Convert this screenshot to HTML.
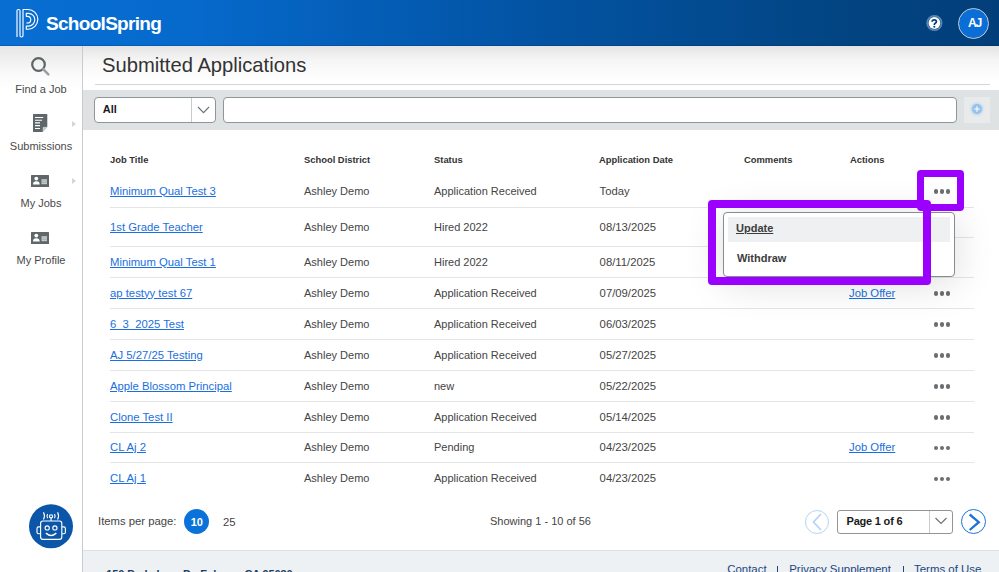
<!DOCTYPE html>
<html><head><meta charset="utf-8">
<style>
*{box-sizing:border-box;margin:0;padding:0}
html,body{width:999px;height:572px;overflow:hidden;background:#fff;font-family:"Liberation Sans",sans-serif;color:#333}
.a{position:absolute}
svg{display:block}
#hdr{left:0;top:0;width:999px;height:46px;background:linear-gradient(90deg,#086ed2 0%,#066acd 18%,#0354a5 52%,#024481 85%,#023e7a 100%);border-bottom:1px solid rgba(0,20,60,0.18)}
#logo-t{left:46px;top:13.3px;color:#fff;font-weight:bold;font-size:19px;letter-spacing:-0.7px}
#side{left:0;top:46px;width:83px;height:526px;background:linear-gradient(180deg,#e6e6e6 0px,#fafafa 28px,#fff 45px);border-right:1px solid #c9cccf}
#mainshade{left:83px;top:46px;width:916px;height:40px;background:linear-gradient(180deg,#e4e4e4 0px,#f6f6f6 15px,#fff 35px)}
.nav{left:0;width:82px;text-align:center;font-size:11px;color:#4a4a4a}
.caret{width:0;height:0;border-top:3.5px solid transparent;border-bottom:3.5px solid transparent;border-left:4px solid #d3d6d7}
#title{left:102px;top:54.2px;font-size:20.2px;color:#333}
#hr{left:95px;top:84px;width:895px;height:1px;background:#d6d6d6}
#band{left:83px;top:90px;width:916px;height:40px;background:#dfe2e3}
#sel{left:94px;top:97px;width:122px;height:26px;background:#fff;border:1px solid #8f9598;border-radius:4px}
#inp{left:223px;top:97px;width:734px;height:26px;background:#fff;border:1px solid #8f9598;border-radius:4px}
#plus{left:964px;top:97px;width:25.5px;height:25.5px;background:#e8eaeb}
th,td{font-size:11px}
.th{font-size:9.4px;font-weight:bold;color:#333;top:153.9px}
.cell{font-size:11px;color:#444;white-space:nowrap}
.lnk{color:#1a6fe0;text-decoration:underline;font-size:11.3px}
.dt{font-size:11.3px}
.div{left:110px;width:864px;height:1px;background:#e3e5e6}
.dots{width:16px;height:4px}
.dots i{position:absolute;top:0;width:4.4px;height:4.4px;border-radius:50%;background:#6a6e71}
</style></head><body>
<div id="hdr" class="a"></div>
<svg class="a" style="left:0;top:0" width="50" height="45" viewBox="0 0 50 45"><path d="M17 37 V10.6 Q17 9.5 18.5 9.5 Q20 9.5 20 10.6 V35.8 Q20 37 21.5 37 Q23 37 23 35.8 V9.5 H28 A9.85 9.85 0 0 1 28 29.2 H26.3 V26.1 H28.4 A6.4 6.4 0 0 0 28.4 13.3 H26.3 V16.3 H27.4 A3.35 3.35 0 0 1 27.4 23 H26.3" fill="none" stroke="#fff" stroke-width="1.15" stroke-linejoin="round"/></svg>
<div id="logo-t" class="a">SchoolSpring</div>
<svg class="a" style="left:924px;top:12px" width="20" height="22" viewBox="0 0 20 22"><circle cx="10.4" cy="11" r="7.2" fill="none" stroke="rgba(200,220,245,0.45)" stroke-width="1.8"/><circle cx="10.4" cy="11" r="5.9" fill="#fff"/><path d="M8.1 9.7 Q8.1 7.8 10.3 7.8 Q12.4 7.8 12.4 9.6 Q12.4 10.7 11.2 11.3 Q10.3 11.8 10.3 12.9" fill="none" stroke="#053e7c" stroke-width="1.75"/><circle cx="10.3" cy="14.7" r="1.05" fill="#053e7c"/></svg>
<div class="a" style="left:958px;top:8px;width:31px;height:31px;border-radius:50%;background:#0a6ed6;border:1.5px solid #c0c8d4"></div>
<div class="a" style="left:959px;top:16.3px;width:31px;text-align:center;font-size:12.2px;font-weight:bold;color:#fff;letter-spacing:-1.4px">AJ</div>

<div id="side" class="a"></div>
<div id="mainshade" class="a"></div>

<!-- nav -->
<div class="a" style="left:30px;top:56px">
<svg width="22" height="22" viewBox="0 0 22 22"><circle cx="8.5" cy="8.5" r="6.3" fill="none" stroke="#5f6466" stroke-width="2.2"/><path d="M13.2 13.2 L18.3 18.3" stroke="#9a9ea0" stroke-width="2.5" stroke-linecap="round"/></svg>
</div>
<div class="a nav" style="top:83.2px">Find a Job</div>
<svg class="a" style="left:33px;top:114px" width="15" height="18" viewBox="0 0 15 18"><path d="M0 0.6 Q0 0 0.6 0 H13.7 Q14.3 0 14.3 0.6 V12.7 L9.6 18 H0.6 Q0 18 0 17.4 Z" fill="#5f6769"/><path d="M9.6 18 L9.8 13.6 Q9.8 12.9 10.6 12.9 L14.3 12.7 Z" fill="#c9cdce"/><path d="M2 3.5 H10.3 M2 6.2 H9 M2 8.9 H7 M2 11.6 H7 M2 14.5 H7" stroke="#fff" stroke-width="1.1"/></svg>
<div class="a caret" style="left:72px;top:121px"></div>
<div class="a nav" style="top:140.3px">Submissions</div>
<div class="a" style="left:31px;top:175px"><svg width="18" height="12" viewBox="0 0 18 12"><rect width="18" height="12" rx="0.5" fill="#5f6769"/><circle cx="5.3" cy="3.6" r="1.9" fill="#fff"/><path d="M2 9.5 Q2 6.2 5.3 6.2 Q8.7 6.2 8.7 9.5 Z" fill="#fff"/><rect x="10.5" y="4.2" width="5.5" height="5" fill="#c9cdce"/><path d="M10.5 5.9 H16 M10.5 7.6 H16" stroke="#8e9496" stroke-width="0.5"/></svg></div>
<div class="a caret" style="left:72px;top:178px"></div>
<div class="a nav" style="top:197px">My Jobs</div>
<div class="a" style="left:31px;top:232px"><svg width="18" height="12" viewBox="0 0 18 12"><rect width="18" height="12" rx="0.5" fill="#5f6769"/><circle cx="5.3" cy="3.6" r="1.9" fill="#fff"/><path d="M2 9.5 Q2 6.2 5.3 6.2 Q8.7 6.2 8.7 9.5 Z" fill="#fff"/><rect x="10.5" y="4.2" width="5.5" height="5" fill="#c9cdce"/><path d="M10.5 5.9 H16 M10.5 7.6 H16" stroke="#8e9496" stroke-width="0.5"/></svg></div>
<div class="a nav" style="top:254.1px">My Profile</div>

<!-- robot -->
<svg class="a" style="left:29px;top:504px" width="44" height="45" viewBox="29 504 44 45"><circle cx="51" cy="526.3" r="22" fill="#0b56a8"/><g fill="none" stroke="#fff" stroke-width="1.15"><rect x="40.6" y="521" width="21.2" height="18.3" rx="2.3"/><path d="M40.3 526.9 H38.6 Q37 526.9 37 528.5 V532.2 Q37 533.7 38.6 533.7 H40.3"/><path d="M62.1 526.9 H63.8 Q65.4 526.9 65.4 528.5 V532.2 Q65.4 533.7 63.8 533.7 H62.1"/><circle cx="47.2" cy="527.9" r="2.1"/><circle cx="54.9" cy="527.9" r="2.1"/><path d="M46.3 533.4 Q51.1 537.6 55.9 533.4" stroke-width="1.4" stroke-linecap="round"/><circle cx="51.05" cy="516.3" r="1.6"/><path d="M51.05 517.9 V521"/><path d="M43.5 512.3 Q45.4 515.9 43.5 519.5"/><path d="M47.6 514 Q46.3 516.1 47.6 518.2"/><path d="M54.5 514 Q55.8 516.1 54.5 518.2"/><path d="M57.6 512.3 Q59.5 515.9 57.6 519.5"/></g></svg>

<div id="title" class="a">Submitted Applications</div>
<div id="hr" class="a"></div>
<div id="band" class="a"></div>
<div id="sel" class="a"></div>
<div class="a" style="left:191px;top:98px;width:1px;height:24px;background:#c9cccf"></div>
<div class="a" style="left:102.8px;top:103.3px;font-size:11px;font-weight:bold;color:#1a1a1a">All</div>
<svg class="a" style="left:196px;top:104px" width="15" height="12" viewBox="0 0 15 12"><path d="M2 3 L7.5 8.6 L13 3" fill="none" stroke="#6b7073" stroke-width="1.1"/></svg>
<div id="inp" class="a"></div>
<div id="plus" class="a"></div>
<div class="a" style="left:972.4px;top:104.2px;width:10px;height:10px;border-radius:50%;background:#96c2eb;box-shadow:0 0 2px 1px rgba(150,194,235,0.55)"></div>
<svg class="a" style="left:972.4px;top:104.2px" width="10" height="10" viewBox="0 0 10 10"><path d="M5 2.2 V7.8 M2.2 5 H7.8" stroke="#fff" stroke-width="1.1"/></svg>

<!-- table header -->
<div class="a th" style="left:110px">Job Title</div>
<div class="a th" style="left:304px">School District</div>
<div class="a th" style="left:434px">Status</div>
<div class="a th" style="left:599px">Application Date</div>
<div class="a th" style="left:744px">Comments</div>
<div class="a th" style="left:850px">Actions</div>

<!-- rows -->
<div class="a cell lnk" style="left:110px;top:184.5px">Minimum Qual Test 3</div>
<div class="a cell" style="left:304px;top:184.7px">Ashley Demo</div>
<div class="a cell" style="left:434px;top:184.7px">Application Received</div>
<div class="a cell dt" style="left:599.6px;top:184.5px">Today</div>
<div class="a dots" style="left:934px;top:189.3px"><i style="left:0"></i><i style="left:6px"></i><i style="left:12px"></i></div>
<div class="a cell lnk" style="left:110px;top:220.8px">1st Grade Teacher</div>
<div class="a cell" style="left:304px;top:221.0px">Ashley Demo</div>
<div class="a cell" style="left:434px;top:221.0px">Hired 2022</div>
<div class="a cell dt" style="left:599.6px;top:220.8px">08/13/2025</div>
<div class="a cell lnk" style="left:110px;top:255.8px">Minimum Qual Test 1</div>
<div class="a cell" style="left:304px;top:256.0px">Ashley Demo</div>
<div class="a cell" style="left:434px;top:256.0px">Hired 2022</div>
<div class="a cell dt" style="left:599.6px;top:255.8px">08/11/2025</div>
<div class="a cell lnk" style="left:110px;top:286.5px">ap testyy test 67</div>
<div class="a cell" style="left:304px;top:286.7px">Ashley Demo</div>
<div class="a cell" style="left:434px;top:286.7px">Application Received</div>
<div class="a cell dt" style="left:599.6px;top:286.5px">07/09/2025</div>
<div class="a cell lnk" style="left:849px;top:286.5px">Job Offer</div>
<div class="a dots" style="left:934px;top:291.3px"><i style="left:0"></i><i style="left:6px"></i><i style="left:12px"></i></div>
<div class="a cell lnk" style="left:110px;top:317.5px">6_3_2025 Test</div>
<div class="a cell" style="left:304px;top:317.7px">Ashley Demo</div>
<div class="a cell" style="left:434px;top:317.7px">Application Received</div>
<div class="a cell dt" style="left:599.6px;top:317.5px">06/03/2025</div>
<div class="a dots" style="left:934px;top:322.3px"><i style="left:0"></i><i style="left:6px"></i><i style="left:12px"></i></div>
<div class="a cell lnk" style="left:110px;top:348.5px">AJ 5/27/25 Testing</div>
<div class="a cell" style="left:304px;top:348.7px">Ashley Demo</div>
<div class="a cell" style="left:434px;top:348.7px">Application Received</div>
<div class="a cell dt" style="left:599.6px;top:348.5px">05/27/2025</div>
<div class="a dots" style="left:934px;top:353.3px"><i style="left:0"></i><i style="left:6px"></i><i style="left:12px"></i></div>
<div class="a cell lnk" style="left:110px;top:379.5px">Apple Blossom Principal</div>
<div class="a cell" style="left:304px;top:379.7px">Ashley Demo</div>
<div class="a cell" style="left:434px;top:379.7px">new</div>
<div class="a cell dt" style="left:599.6px;top:379.5px">05/22/2025</div>
<div class="a dots" style="left:934px;top:384.3px"><i style="left:0"></i><i style="left:6px"></i><i style="left:12px"></i></div>
<div class="a cell lnk" style="left:110px;top:410.5px">Clone Test II</div>
<div class="a cell" style="left:304px;top:410.7px">Ashley Demo</div>
<div class="a cell" style="left:434px;top:410.7px">Application Received</div>
<div class="a cell dt" style="left:599.6px;top:410.5px">05/14/2025</div>
<div class="a dots" style="left:934px;top:415.3px"><i style="left:0"></i><i style="left:6px"></i><i style="left:12px"></i></div>
<div class="a cell lnk" style="left:110px;top:441.2px">CL Aj 2</div>
<div class="a cell" style="left:304px;top:441.4px">Ashley Demo</div>
<div class="a cell" style="left:434px;top:441.4px">Pending</div>
<div class="a cell dt" style="left:599.6px;top:441.2px">04/23/2025</div>
<div class="a cell lnk" style="left:849px;top:441.2px">Job Offer</div>
<div class="a dots" style="left:934px;top:446.1px"><i style="left:0"></i><i style="left:6px"></i><i style="left:12px"></i></div>
<div class="a cell lnk" style="left:110px;top:471.8px">CL Aj 1</div>
<div class="a cell" style="left:304px;top:471.9px">Ashley Demo</div>
<div class="a cell" style="left:434px;top:471.9px">Application Received</div>
<div class="a cell dt" style="left:599.6px;top:471.7px">04/23/2025</div>
<div class="a dots" style="left:934px;top:476.6px"><i style="left:0"></i><i style="left:6px"></i><i style="left:12px"></i></div>
<div class="a div" style="top:207px"></div>
<div class="a div" style="top:246px;width:600px"></div>
<div class="a div" style="top:237px;left:955px;width:19px"></div>
<div class="a div" style="top:277px"></div>
<div class="a div" style="top:308px"></div>
<div class="a div" style="top:339px"></div>
<div class="a div" style="top:370px"></div>
<div class="a div" style="top:401px"></div>
<div class="a div" style="top:432px"></div>
<div class="a div" style="top:462px"></div>
<!-- /rows -->

<!-- dropdown -->
<div class="a" style="left:723px;top:212px;width:232px;height:65px;background:#fff;border:1px solid #868c8f;border-radius:4px;box-shadow:0 6px 40px rgba(0,0,0,0.14)"></div>
<div class="a" style="left:728px;top:216.5px;width:222px;height:25.5px;background:#eef0f1"></div>
<div class="a" style="left:736px;top:221.5px;font-size:11px;font-weight:bold;color:#3d3d3d;text-decoration:underline">Update</div>
<div class="a" style="left:737px;top:252px;font-size:11px;font-weight:bold;color:#3d3d3d">Withdraw</div>
<!-- purple highlight boxes -->
<div class="a" style="left:708px;top:200px;width:222.5px;height:85px;border:8px solid #9b00ff;border-radius:4px"></div>
<div class="a" style="left:917px;top:169.5px;width:47px;height:41px;border:7.5px solid #9b00ff;border-radius:4px"></div>

<!-- pagination -->
<div class="a" style="left:98px;top:515px;font-size:11.3px;color:#444">Items per page:</div>
<div class="a" style="left:184px;top:509px;width:25px;height:25px;border-radius:50%;background:#0b72da"></div>
<div class="a" style="left:184.3px;top:515.6px;width:25px;text-align:center;font-size:11px;font-weight:bold;color:#fff">10</div>
<div class="a" style="left:223px;top:515.8px;font-size:11.3px;color:#444">25</div>
<div class="a" style="left:490px;top:515px;font-size:11px;color:#444">Showing 1 - 10 of 56</div>
<div class="a" style="left:805px;top:509.5px;width:24px;height:24px;border-radius:50%;border:1.3px solid #b6d3f3"></div>
<svg class="a" style="left:805px;top:509.5px" width="24" height="24" viewBox="0 0 24 24"><path d="M16 4 L8.5 12 L16 20" fill="none" stroke="#b3d4f4" stroke-width="1.8"/></svg>
<div class="a" style="left:837px;top:509.5px;width:115.5px;height:24.5px;background:#fff;border:1px solid #8f9598;border-radius:3px"></div>
<div class="a" style="left:929px;top:510.5px;width:1px;height:22.5px;background:#c9cccf"></div>
<div class="a" style="left:846.5px;top:515px;font-size:11px;font-weight:bold;color:#1a1a1a;letter-spacing:-0.2px">Page 1 of 6</div>
<svg class="a" style="left:933px;top:516px" width="16" height="10" viewBox="0 0 16 10"><path d="M2.5 2 L8 7.5 L13.5 2" fill="none" stroke="#6b7073" stroke-width="1.1"/></svg>
<div class="a" style="left:960.5px;top:508.5px;width:25.5px;height:25.5px;border-radius:50%;border:1.6px solid #1b73d9"></div>
<svg class="a" style="left:960.5px;top:508.5px" width="26" height="26" viewBox="0 0 26 26"><path d="M8.7 5.5 L17.8 13.2 L8.7 21" fill="none" stroke="#1b73d9" stroke-width="2.3"/></svg>

<!-- footer -->
<div class="a" style="left:83px;top:549.5px;width:916px;height:23px;background:#edf1f4;border-top:1.2px solid #dde2e5"></div>
<div class="a" style="left:106.3px;top:567.8px;font-size:11px;font-weight:bold;color:#1e3f66;white-space:nowrap;letter-spacing:-0.12px">150 Parkshore Dr, Folsom, CA 95630</div>
<div class="a" style="left:727.2px;top:562.5px;font-size:11.45px;color:#1b4680;white-space:nowrap">Contact</div>
<div class="a" style="left:777px;top:566px;width:1px;height:8px;background:#1b4680"></div>
<div class="a" style="left:789.2px;top:562.5px;font-size:11.45px;color:#1b4680;white-space:nowrap">Privacy Supplement</div>
<div class="a" style="left:903px;top:566px;width:1px;height:8px;background:#1b4680"></div>
<div class="a" style="left:914px;top:562.5px;font-size:11.45px;color:#1b4680;white-space:nowrap">Terms of Use</div>
</body></html>
